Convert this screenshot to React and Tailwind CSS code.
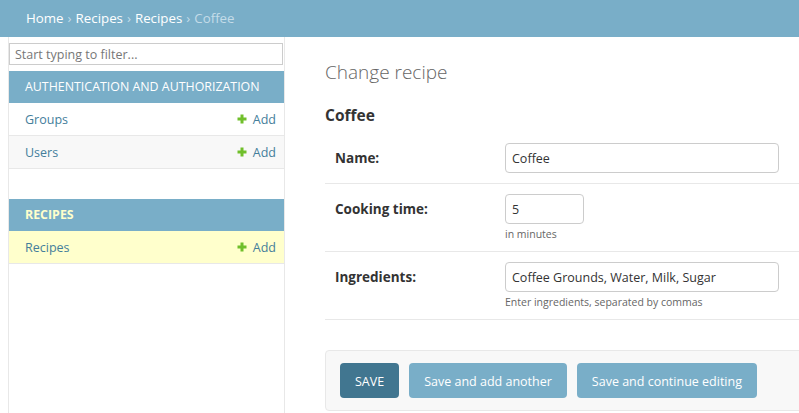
import React from "react";

const font = { fontFamily: '"Open Sans", "Noto Sans", sans-serif' };

const PlusIcon = () => (
  <svg width="10" height="10" viewBox="0 0 10 10" className="inline-block -mt-[3px]">
    <path d="M5 0.5v9M0.5 5h9" stroke="#70bf2b" strokeWidth="3" />
  </svg>
);

const NavRow = ({ name, shaded, current }) => (
  <div
    className={`flex items-center justify-between h-[33px] pt-[2px] pl-[16px] pr-[8px] border-b border-[#e8e8e8] text-[12.5px] ${
      current ? "bg-[#ffffcc]" : shaded ? "bg-[#f8f8f8]" : "bg-white"
    }`}
  >
    <span className="text-[#447e9b]">{name}</span>
    <span className="flex items-center gap-[6px] text-[#447e9b]">
      <PlusIcon />
      Add
    </span>
  </div>
);

const FormRow = ({ label, children }) => (
  <div className="flex items-start p-[10px] border-b border-[#e8e8e8]">
    <label className="w-[160px] h-[30px] pt-[1px] flex items-center text-[13.5px] font-bold text-[#333] mr-[10px]">
      {label}
    </label>
    <div className="flex flex-col">{children}</div>
  </div>
);

export default function App() {
  return (
    <div className="w-full h-screen overflow-hidden bg-white text-[#333]" style={font}>
      {/* breadcrumbs */}
      <div className="h-[37px] bg-[#79aec8] flex items-center pl-[26px] text-[13.3px]">
        <span className="text-white">Home</span>
        <span className="text-[#c4dce8] mx-[4px]">›</span>
        <span className="text-white">Recipes</span>
        <span className="text-[#c4dce8] mx-[4px]">›</span>
        <span className="text-white">Recipes</span>
        <span className="text-[#c4dce8] mx-[4px]">›</span>
        <span className="text-[#c4dce8]">Coffee</span>
      </div>

      <div className="flex h-[376px]">
        <div className="w-[9px] shrink-0 border-r border-[#e8e8e8]" />

        {/* sidebar */}
        <div className="w-[276px] shrink-0 border-r border-[#e8e8e8]">
          <div className="pt-[6px] pb-[6px] pr-[1px]">
            <input
              className="block w-full h-[22px] border border-[#ccc] bg-white px-[5px] text-[12.5px] outline-none placeholder-[#777]"
              style={font}
              placeholder="Start typing to filter..."
            />
          </div>

          <div className="h-[32px] pt-[1px] bg-[#79aec8] flex items-center pl-[16px] text-[12.4px] text-white">
            AUTHENTICATION AND AUTHORIZATION
          </div>
          <NavRow name="Groups" />
          <NavRow name="Users" shaded />

          <div className="mt-[30px] h-[32px] pt-[1px] bg-[#79aec8] flex items-center pl-[16px] text-[12.4px] font-bold text-[#ffffcc]">
            RECIPES
          </div>
          <NavRow name="Recipes" current />
        </div>

        {/* content */}
        <div className="flex-1 min-w-0 pl-[40px] pt-[23px]">
          <h1 className="text-[19px] leading-[24px] font-light text-[#666]">Change recipe</h1>
          <h2 className="mt-[21px] text-[15.5px] leading-[20px] font-bold text-[#333]">Coffee</h2>

          <div className="mt-[8px]">
            <FormRow label="Name:">
              <input
                className="w-[274px] h-[30px] border border-[#ccc] rounded-[4px] px-[6px] pt-[1px] text-[12.5px] text-[#333] outline-none"
                style={font}
                defaultValue="Coffee"
              />
            </FormRow>
            <FormRow label="Cooking time:">
              <input
                className="w-[79px] h-[30px] border border-[#ccc] rounded-[4px] px-[6px] pt-[1px] text-[12.5px] text-[#333] outline-none"
                style={font}
                defaultValue="5"
              />
              <span className="mt-[3px] text-[10.5px] leading-[14px] text-[#666]">in minutes</span>
            </FormRow>
            <FormRow label="Ingredients:">
              <input
                className="w-[274px] h-[30px] border border-[#ccc] rounded-[4px] px-[6px] pt-[1px] text-[12.5px] text-[#333] outline-none"
                style={font}
                defaultValue="Coffee Grounds, Water, Milk, Sugar"
              />
              <span className="mt-[3px] text-[10.5px] leading-[14px] text-[#666]">
                Enter ingredients, separated by commas
              </span>
            </FormRow>
          </div>

          <div className="mt-[30px] -mr-[10px] flex gap-[10px] bg-[#f8f8f8] border border-[#e8e8e8] rounded-[4px] px-[14px] py-[12px]">
            <button className="h-[35px] px-[15px] pt-[3px] rounded-[4px] bg-[#417690] text-white text-[12.5px]">
              SAVE
            </button>
            <button className="h-[35px] px-[15px] pt-[3px] rounded-[4px] bg-[#79aec8] text-white text-[12.5px]">
              Save and add another
            </button>
            <button className="h-[35px] px-[15px] pt-[3px] rounded-[4px] bg-[#79aec8] text-white text-[12.5px]">
              Save and continue editing
            </button>
          </div>
        </div>
      </div>
    </div>
  );
}
